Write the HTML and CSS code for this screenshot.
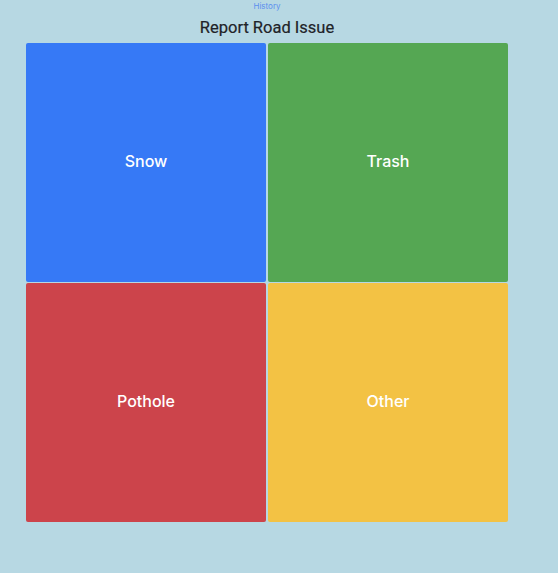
FILE: index.html
```html
<!DOCTYPE html>
<html>
<head>
<meta charset="utf-8">
<link rel="stylesheet" href="styles.css">
</head>
<body>
<div class="page">
  <a class="history" href="#">History</a>
  <h1 class="title">Report Road Issue</h1>
  <div class="grid">
    <div class="tile snow">Snow</div>
    <div class="tile trash">Trash</div>
    <div class="tile pothole">Pothole</div>
    <div class="tile other">Other</div>
  </div>
</div>
</body>
</html>
```
FILE: styles.css
```css
html, body {
  margin: 0;
  padding: 0;
  background: #b7d8e3;
  height: 100%;
}
body {
  font-family: "Roboto", "Liberation Sans", sans-serif;
}
.page {
  width: 482px;
  margin-left: 26px;
  display: flex;
  flex-direction: column;
  align-items: center;
}
.history {
  font-family: "Inter", "Liberation Sans", sans-serif;
  font-size: 8px;
  color: #5b8fee;
  text-decoration: none;
  margin-top: 1px;
  line-height: 10px;
}
.title {
  font-size: 16.5px;
  font-weight: 400;
  color: #1f2328;
  margin: 6px 0 0 0;
  line-height: 22px;
  -webkit-text-stroke: 0.2px #1f2328;
}
.grid {
  margin-top: 4px;
  display: grid;
  grid-template-columns: 240px 240px;
  grid-template-rows: 239px 239px;
  column-gap: 2px;
  row-gap: 1px;
}
.tile {
  border-radius: 2px;
  display: flex;
  align-items: center;
  justify-content: center;
  color: #ffffff;
  font-family: "Inter", "Liberation Sans", sans-serif;
  font-size: 16px;
  font-weight: 500;
  padding-bottom: 3px;
  box-sizing: border-box;
}
.snow { background: #3679f6; }
.trash { background: #55a753; }
.pothole { background: #cc444b; }
.other { background: #f3c244; }
```
